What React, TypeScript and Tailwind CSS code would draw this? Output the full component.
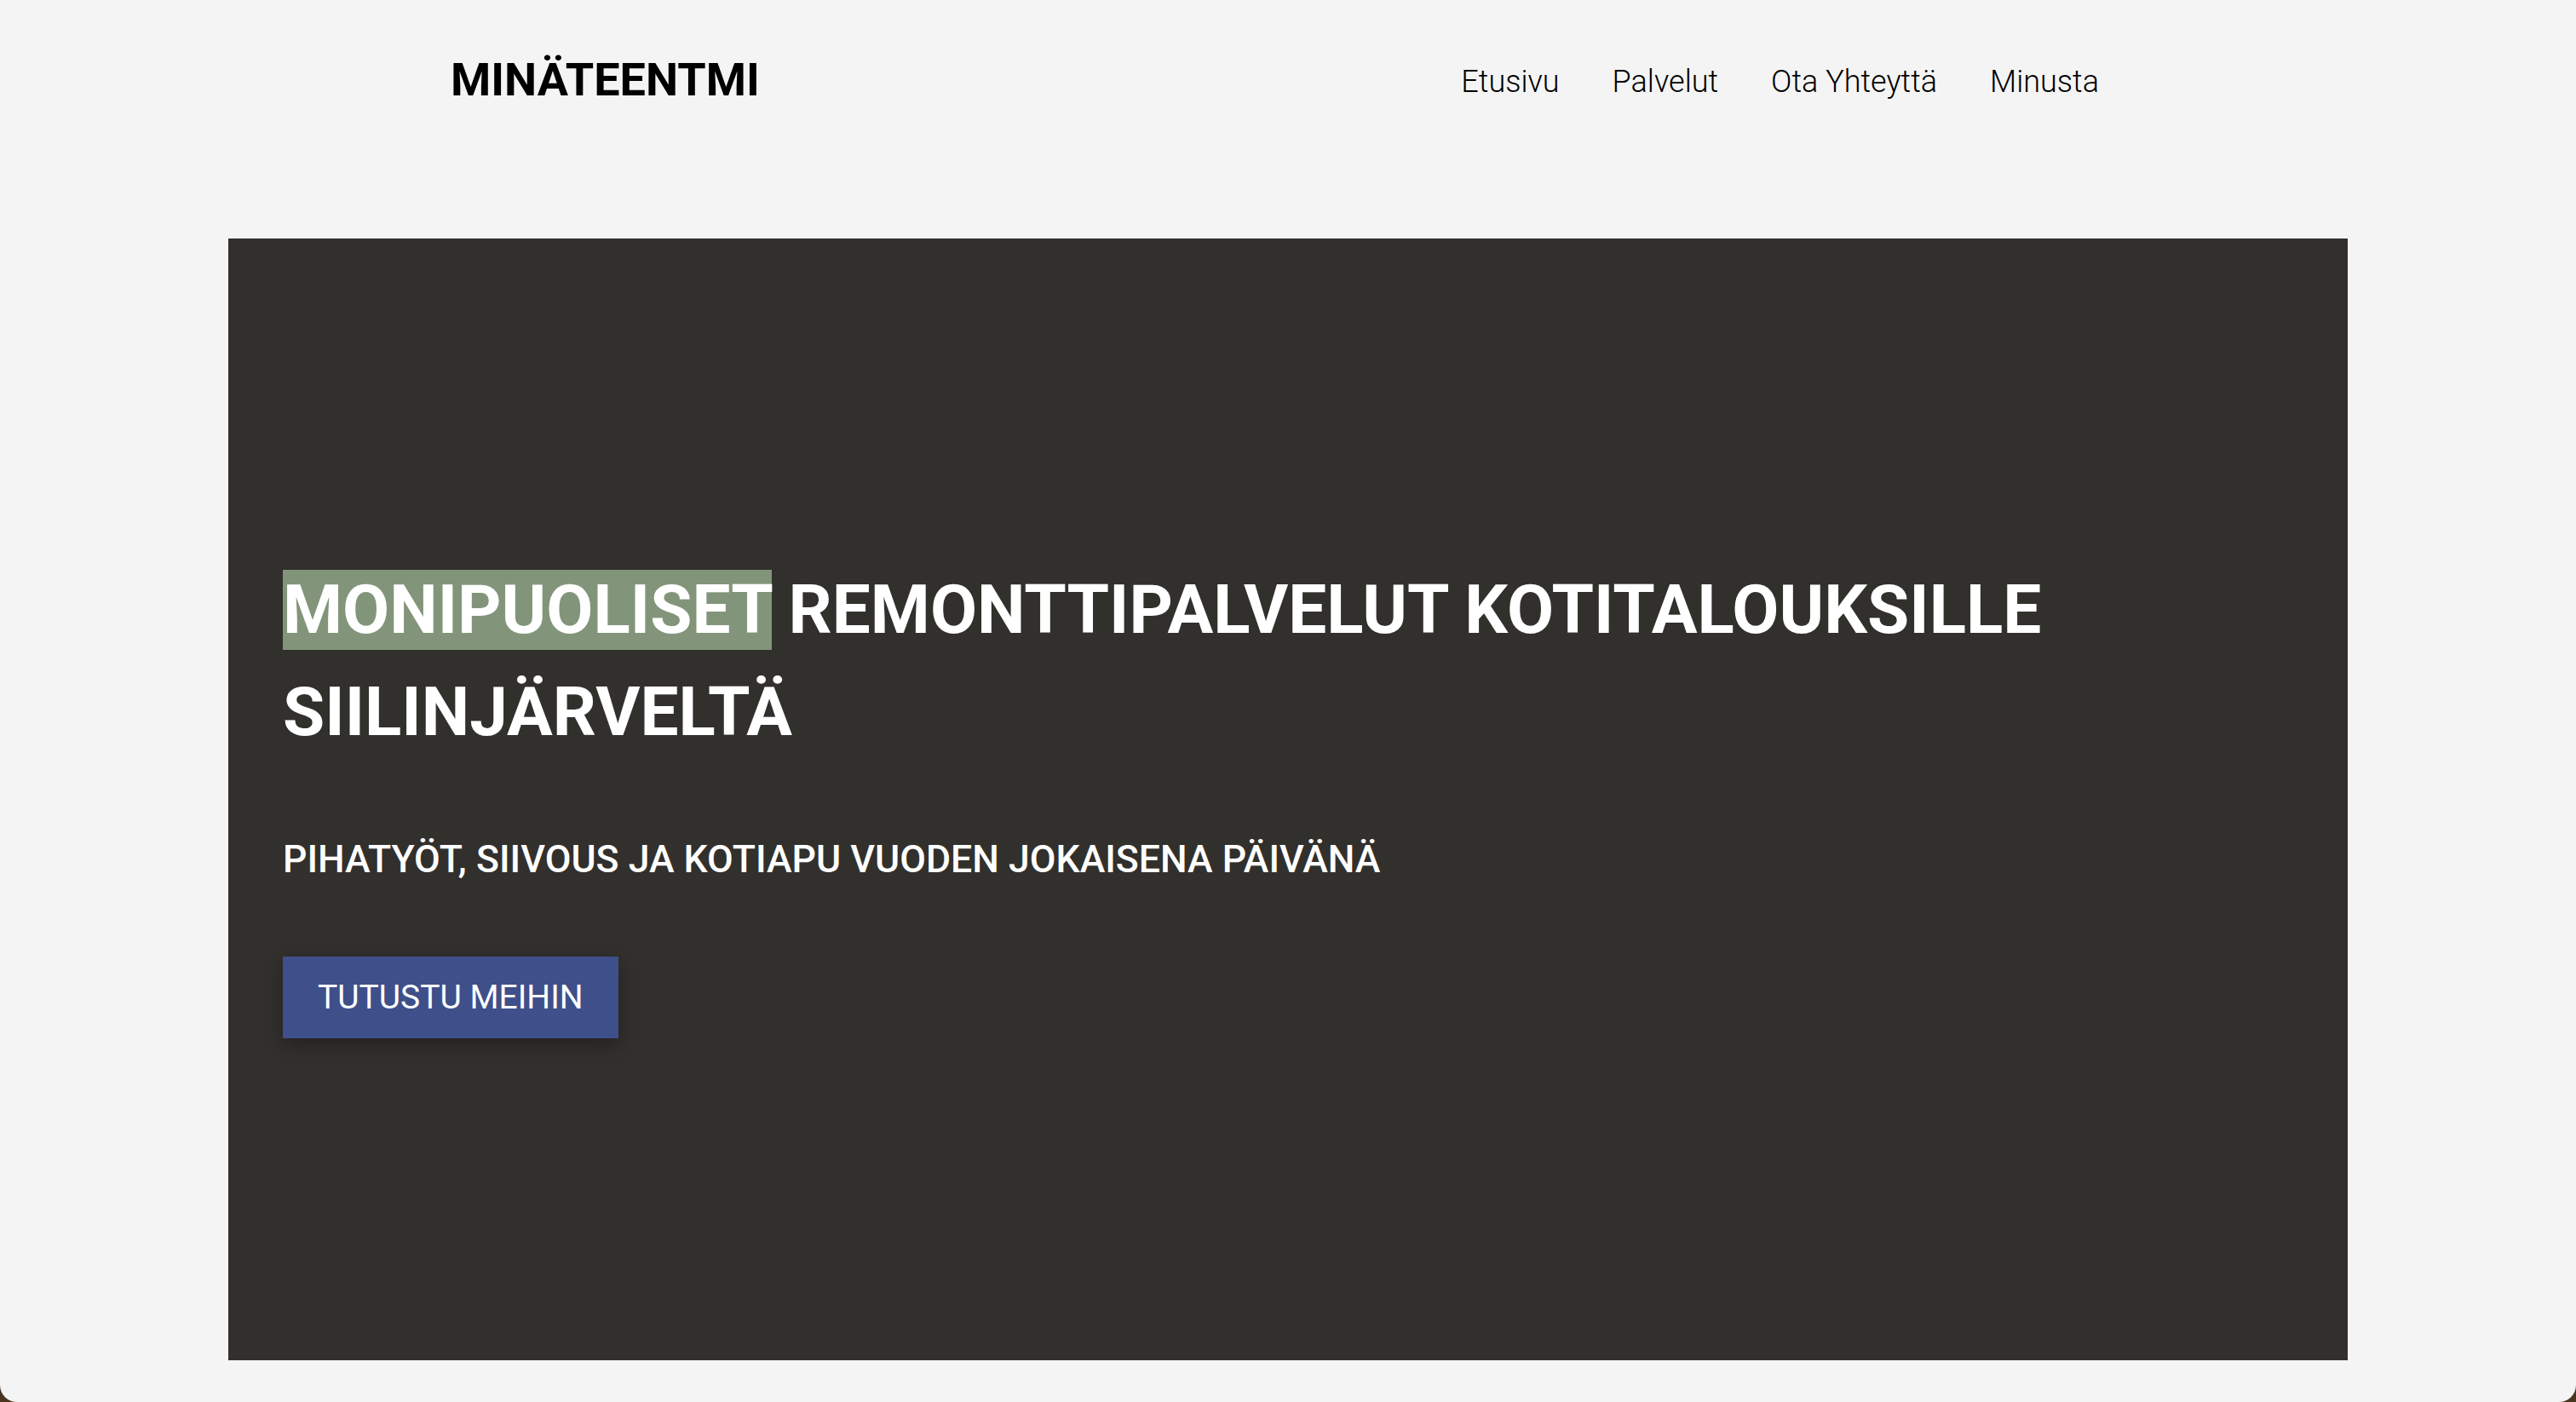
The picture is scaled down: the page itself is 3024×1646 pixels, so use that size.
import React from "react";

const font = { fontFamily: "Roboto, 'Noto Sans', Arial, sans-serif" };

function NavLink({ label }: { label: string }) {
  return (
    <a href="#" className="text-[36px] font-light leading-none text-black">
      {label}
    </a>
  );
}

export default function App() {
  return (
    <div className="h-[1646px] w-full bg-[#4a3520]" style={font}>
      <div className="flex h-full w-full flex-col rounded-b-[20px] bg-[#f4f4f4]">
        <header className="flex h-[188px] flex-row items-center justify-between pl-[529px] pr-[560px]">
          <a href="#" className="text-[54px] font-bold leading-none text-black">
            MINÄTEENTMI
          </a>
          <nav className="flex items-center gap-[62px] pt-[3px]">
            <NavLink label="Etusivu" />
            <NavLink label="Palvelut" />
            <NavLink label="Ota Yhteyttä" />
            <NavLink label="Minusta" />
          </nav>
        </header>

        <main className="mx-[268px] mt-[92px] flex h-[1317px] flex-col justify-center bg-[#32302c] pb-[2px] pl-16">
          <h1 className="text-[80px] font-bold leading-[120px] text-white">
            <span className="bg-[#82957a]">MONIPUOLISET</span> REMONTTIPALVELUT KOTITALOUKSILLE
            <br />
            SIILINJÄRVELTÄ
          </h1>
          <p className="mt-[79px] text-[44.6px] font-medium leading-[68px] text-white">
            PIHATYÖT, SIIVOUS JA KOTIAPU VUODEN JOKAISENA PÄIVÄNÄ
          </p>
          <button className="mt-[80px] self-start bg-[#3e4f8a] px-[41px] py-[24px] text-[39px] leading-[48px] text-white shadow-[0_8px_20px_rgba(0,0,0,0.3)]">
            TUTUSTU MEIHIN
          </button>
        </main>
      </div>
    </div>
  );
}
